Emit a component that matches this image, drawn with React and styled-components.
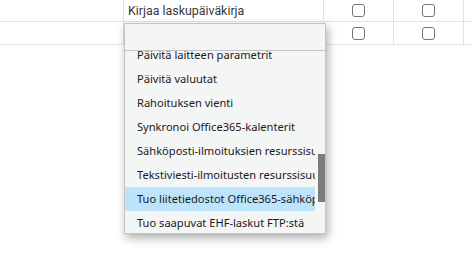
import styled, { createGlobalStyle } from "styled-components";

const GlobalStyle = createGlobalStyle`
  html, body {
    margin: 0;
    padding: 0;
    background: #ffffff;
  }
  body {
    font-family: Roboto, "Liberation Sans", sans-serif;
  }
  #root {
    min-height: 100vh;
  }
`;

const Table = styled.div`
  display: grid;
  grid-template-columns: 124px 200px 70px 70px 1fr;
  margin-top: -1px;
`;

const Cell = styled.div`
  position: relative;
  height: 22px;
  border-bottom: 1px solid #e2e2e2;
  border-right: ${(p) => (p.$last ? "none" : "1px solid #e2e2e2")};
  display: flex;
  align-items: center;
  justify-content: ${(p) => (p.$center ? "center" : "flex-start")};
  padding-left: ${(p) => (p.$text ? "4px" : "0")};
  font-size: 12.4px;
  color: #3a3a3a;
  white-space: nowrap;
`;

const Checkbox = styled.span`
  display: block;
  width: 11px;
  height: 11px;
  border: 1px solid #767676;
  border-radius: 3px;
  background: #ffffff;
`;

const Dropdown = styled.div`
  position: absolute;
  top: 1px;
  left: 0;
  z-index: 10;
  width: 200px;
  background: #f4f5f5;
  border: 1px solid #c4c4c4;
  box-shadow: 2px 4px 9px rgba(0, 0, 0, 0.32);
  font-family: "Noto Sans", "Open Sans", sans-serif;
  font-size: 11.1px;
  color: #1a1a1a;
`;

const Search = styled.div`
  height: 26px;
  border-bottom: 1px solid #c4c4c4;
`;

const Body = styled.div`
  display: flex;
  height: 182px;
`;

const List = styled.div`
  flex: 1;
  overflow: hidden;
`;

const Items = styled.div`
  margin-top: ${(p) => -p.$offset}px;
`;

const Item = styled.div`
  height: 24px;
  line-height: 24px;
  padding-left: 12px;
  white-space: nowrap;
  overflow: hidden;
  background: ${(p) => (p.$active ? "#bde4fa" : "transparent")};
`;

const Track = styled.div`
  width: 10px;
  display: flex;
  flex-direction: column;
  align-items: flex-end;
`;

const Thumb = styled.div`
  width: 7px;
  height: 48px;
  margin-top: ${(p) => p.$top}px;
  background: #7b7b7b;
`;

const items = [
  "Päivitä laitteen parametrit",
  "Päivitä valuutat",
  "Rahoituksen vienti",
  "Synkronoi Office365-kalenterit",
  "Sähköposti-ilmoituksien resurssisuunnittelu",
  "Tekstiviesti-ilmoitusten resurssisuunnittelu",
  "Tuo liitetiedostot Office365-sähköpostista",
  "Tuo saapuvat EHF-laskut FTP:stä",
];

export default function App() {
  return (
    <>
      <GlobalStyle />
      <Table>
        <Cell />
        <Cell $text>Kirjaa laskupäiväkirja</Cell>
        <Cell $center>
          <Checkbox />
        </Cell>
        <Cell $center>
          <Checkbox />
        </Cell>
        <Cell $last />

        <Cell />
        <Cell>
          <Dropdown>
            <Search />
            <Body>
              <List>
                <Items $offset={8}>
                  {items.map((t, i) => (
                    <Item key={t} $active={i === 6}>
                      {t}
                    </Item>
                  ))}
                </Items>
              </List>
              <Track>
                <Thumb $top={103} />
              </Track>
            </Body>
          </Dropdown>
        </Cell>
        <Cell $center>
          <Checkbox />
        </Cell>
        <Cell $center>
          <Checkbox />
        </Cell>
        <Cell $last />
      </Table>
    </>
  );
}
